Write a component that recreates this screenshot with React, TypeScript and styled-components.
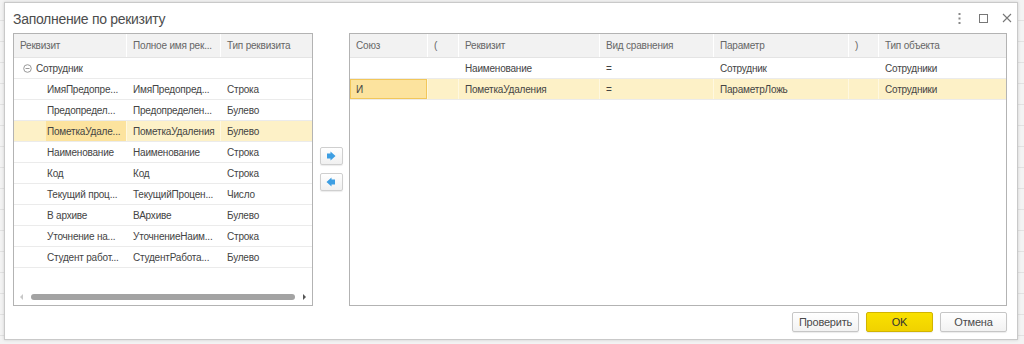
import React from "react";
import styled, { createGlobalStyle } from "styled-components";

const Global = createGlobalStyle`
  html, body { margin: 0; padding: 0; }
  body {
    width: 1024px; height: 344px; overflow: hidden;
    background: #efefef;
    font-family: "Liberation Sans", Arial, sans-serif;
  }
`;

const Backdrop = styled.div`
  width: 1024px;
  height: 344px;
  box-sizing: border-box;
  padding: 2px 6px 4px 4px;
  background:
    repeating-linear-gradient(to bottom, transparent 0, transparent 20px, #e2e2e2 20px, #e2e2e2 21px),
    #f3f3f3;
`;

const Dialog = styled.div`
  width: 1014px;
  height: 338px;
  box-sizing: border-box;
  background: #fff;
  border: 1px solid #c9c9c9;
  box-shadow: 0 0 3px rgba(0,0,0,0.15);
  display: flex;
  flex-direction: column;
`;

const TitleBar = styled.div`
  height: 30px;
  display: flex;
  align-items: center;
  padding: 0 3px 0 8px;
  flex: none;
`;

const Title = styled.div`
  flex: 1;
  font-size: 14px;
  letter-spacing: -0.3px;
  color: #4d4d4d;
  padding-top: 1px;
`;

const WinGroup = styled.div`
  display: flex;
  gap: 10px;
  align-items: center;
`;

const WinBtn = styled.div`
  width: 14px;
  height: 20px;
  display: flex;
  align-items: center;
  justify-content: center;
`;

const Body = styled.div`
  display: flex;
  padding: 0 0 0 8px;
  height: 273px;
  flex: none;
`;

const Table = styled.div<{ $w: number }>`
  width: ${(p) => p.$w}px;
  height: 273px;
  box-sizing: border-box;
  border: 1px solid #b3b3b3;
  display: flex;
  flex-direction: column;
  position: relative;
  flex: none;
`;

const HeadRow = styled.div`
  display: flex;
  height: 23px;
  background: #f2f2f2;
  border-bottom: 1px solid #e4e4e4;
  flex: none;
`;

const HeadCell = styled.div<{ $w: number }>`
  width: ${(p) => p.$w}px;
  flex: none;
  box-sizing: border-box;
  padding-left: 6px;
  font-size: 10px;
  letter-spacing: -0.2px;
  color: #666;
  display: flex;
  align-items: center;
  border-right: 1px solid #fff;
  white-space: nowrap;
  overflow: hidden;
  &:last-child { border-right: none; }
`;

const Row = styled.div<{ $sel?: boolean }>`
  display: flex;
  height: 20px;
  border-bottom: 1px solid #ebebeb;
  background: ${(p) => (p.$sel ? "#fdf1c7" : "#fff")};
  flex: none;
`;

const Cell = styled.div<{ $w: number; $pad?: number; $focus?: boolean; $sep?: boolean }>`
  width: ${(p) => p.$w}px;
  flex: none;
  box-sizing: border-box;
  padding-left: ${(p) => p.$pad ?? 6}px;
  font-size: 10px;
  letter-spacing: -0.2px;
  color: #444;
  display: flex;
  align-items: center;
  white-space: nowrap;
  overflow: hidden;
  border-right: 1px solid ${(p) => (p.$sep ? "#fff8e0" : "transparent")};
  ${(p) => (p.$focus ? "background: #fce39e; box-shadow: inset 0 0 0 1px #f2c75a;" : "")}
  &:last-child { border-right: none; }
`;

const HiText = styled.div`
  height: 100%;
  display: flex;
  align-items: center;
  background: #fce39e;
  padding-left: 1px;
  width: 100%;
  overflow: hidden;
`;

const TreeLabel = styled.span`
  margin-left: 4px;
`;

const Scroll = styled.div`
  position: absolute;
  left: 6px;
  right: 6px;
  bottom: 5px;
  height: 6px;
  display: flex;
  align-items: center;
  gap: 3px;
`;

const Thumb = styled.div`
  flex: 1;
  height: 6px;
  border-radius: 3px;
  background: #a3a3a3;
  margin: 0 5px 0 5px;
`;

const Tri = styled.div<{ $dir: "l" | "r" }>`
  width: 0;
  height: 0;
  border-top: 3px solid transparent;
  border-bottom: 3px solid transparent;
  ${(p) =>
    p.$dir === "l"
      ? "border-right: 3px solid #c8c8c8;"
      : "border-left: 3px solid #555;"}
`;

const Mid = styled.div`
  width: 36px;
  flex: none;
  display: flex;
  flex-direction: column;
  align-items: center;
  padding-top: 114px;
  gap: 8px;
  box-sizing: border-box;
`;

const ArrowBtn = styled.div`
  width: 23px;
  height: 18px;
  box-sizing: border-box;
  border: 1px solid #cfcfcf;
  border-radius: 2px;
  background: linear-gradient(#ffffff, #f0f0f0);
  display: flex;
  align-items: center;
  justify-content: center;
  box-shadow: 0 1px 1px rgba(0,0,0,0.08);
`;

const Footer = styled.div`
  display: flex;
  justify-content: flex-end;
  gap: 7px;
  padding: 6px 10px 0 0;
`;

const Btn = styled.div<{ $primary?: boolean }>`
  width: 67px;
  height: 20px;
  box-sizing: border-box;
  border: 1px solid ${(p) => (p.$primary ? "#d2b400" : "#c6c6c6")};
  border-radius: 2px;
  background: ${(p) => (p.$primary ? "linear-gradient(#f9e100, #f0d200)" : "linear-gradient(#ffffff, #f2f2f2)")};
  font-size: 11px;
  letter-spacing: -0.2px;
  color: ${(p) => (p.$primary ? "#333" : "#4a4a4a")};
  display: flex;
  align-items: center;
  justify-content: center;
  box-shadow: 0 1px 1px rgba(0,0,0,0.08);
`;

const Minus = () => (
  <svg width="9" height="9" viewBox="0 0 9 9">
    <circle cx="4.5" cy="4.5" r="3.8" fill="none" stroke="#999" strokeWidth="1" />
    <line x1="2.5" y1="4.5" x2="6.5" y2="4.5" stroke="#999" strokeWidth="1" />
  </svg>
);

const BlueArrow = ({ left }: { left?: boolean }) => (
  <svg width="10" height="10" viewBox="0 0 10 10" style={left ? { transform: "scaleX(-1)" } : undefined}>
    <path d="M1 2.5 H4.5 V0.5 L9.5 5 L4.5 9.5 V7.5 H1 Z" fill="#3d9ee2" />
  </svg>
);

const leftCols = [113, 94, 91];
const leftRows: [string, string, string][] = [
  ["ИмяПредопре...", "ИмяПредопред...", "Строка"],
  ["Предопредел...", "Предопределен...", "Булево"],
  ["ПометкаУдале...", "ПометкаУдаления", "Булево"],
  ["Наименование", "Наименование", "Строка"],
  ["Код", "Код", "Строка"],
  ["Текущий проц...", "ТекущийПроцен...", "Число"],
  ["В архиве", "ВАрхиве", "Булево"],
  ["Уточнение на...", "УточнениеНаим...", "Строка"],
  ["Студент работ...", "СтудентРабота...", "Булево"],
];

const rightCols = [78, 31, 141, 114, 135, 30, 127];
const rightHead = ["Союз", "(", "Реквизит", "Вид сравнения", "Параметр", ")", "Тип объекта"];
const rightRows: string[][] = [
  ["", "", "Наименование", "=", "Сотрудник", "", "Сотрудники"],
  ["И", "", "ПометкаУдаления", "=", "ПараметрЛожь", "", "Сотрудники"],
];

export default function App() {
  return (
    <>
      <Global />
      <Backdrop>
        <Dialog>
          <TitleBar>
            <Title>Заполнение по рекизиту</Title>
            <WinGroup>
              <WinBtn>
                <svg width="3" height="11" viewBox="0 0 3 11">
                  <rect x="0.5" y="0" width="2" height="2" fill="#888" />
                  <rect x="0.5" y="4.5" width="2" height="2" fill="#888" />
                  <rect x="0.5" y="9" width="2" height="2" fill="#888" />
                </svg>
              </WinBtn>
              <WinBtn>
                <svg width="9" height="9" viewBox="0 0 9 9">
                  <rect x="0.5" y="0.5" width="8" height="8" fill="none" stroke="#777" strokeWidth="1" />
                </svg>
              </WinBtn>
              <WinBtn>
                <svg width="10" height="10" viewBox="0 0 10 10">
                  <path d="M1 1 L9 9 M9 1 L1 9" stroke="#777" strokeWidth="1.1" />
                </svg>
              </WinBtn>
            </WinGroup>
          </TitleBar>
          <Body>
            <Table $w={300}>
              <HeadRow>
                <HeadCell $w={leftCols[0]}>Реквизит</HeadCell>
                <HeadCell $w={leftCols[1]}>Полное имя рек...</HeadCell>
                <HeadCell $w={leftCols[2]}>Тип реквизита</HeadCell>
              </HeadRow>
              <Row>
                <Cell $w={leftCols[0]} $pad={9}>
                  <Minus />
                  <TreeLabel>Сотрудник</TreeLabel>
                </Cell>
                <Cell $w={leftCols[1]} />
                <Cell $w={leftCols[2]} />
              </Row>
              {leftRows.map((r, i) => {
                const sel = i === 2;
                return (
                  <Row key={i} $sel={sel}>
                    <Cell $w={leftCols[0]} $pad={sel ? 32 : 33} $sep={sel}>
                      {sel ? <HiText>{r[0]}</HiText> : r[0]}
                    </Cell>
                    <Cell $w={leftCols[1]} $sep={sel}>
                      {r[1]}
                    </Cell>
                    <Cell $w={leftCols[2]}>{r[2]}</Cell>
                  </Row>
                );
              })}
              <Scroll>
                <Tri $dir="l" />
                <Thumb />
                <Tri $dir="r" />
              </Scroll>
            </Table>
            <Mid>
              <ArrowBtn>
                <BlueArrow />
              </ArrowBtn>
              <ArrowBtn>
                <BlueArrow left />
              </ArrowBtn>
            </Mid>
            <Table $w={658}>
              <HeadRow>
                {rightHead.map((h, i) => (
                  <HeadCell key={i} $w={rightCols[i]}>
                    {h}
                  </HeadCell>
                ))}
              </HeadRow>
              {rightRows.map((r, ri) => {
                const sel = ri === 1;
                return (
                  <Row key={ri} $sel={sel}>
                    {r.map((c, ci) => (
                      <Cell key={ci} $w={rightCols[ci]} $focus={sel && ci === 0} $sep={sel}>
                        {c}
                      </Cell>
                    ))}
                  </Row>
                );
              })}
            </Table>
          </Body>
          <Footer>
            <Btn>Проверить</Btn>
            <Btn $primary>OK</Btn>
            <Btn>Отмена</Btn>
          </Footer>
        </Dialog>
      </Backdrop>
    </>
  );
}
